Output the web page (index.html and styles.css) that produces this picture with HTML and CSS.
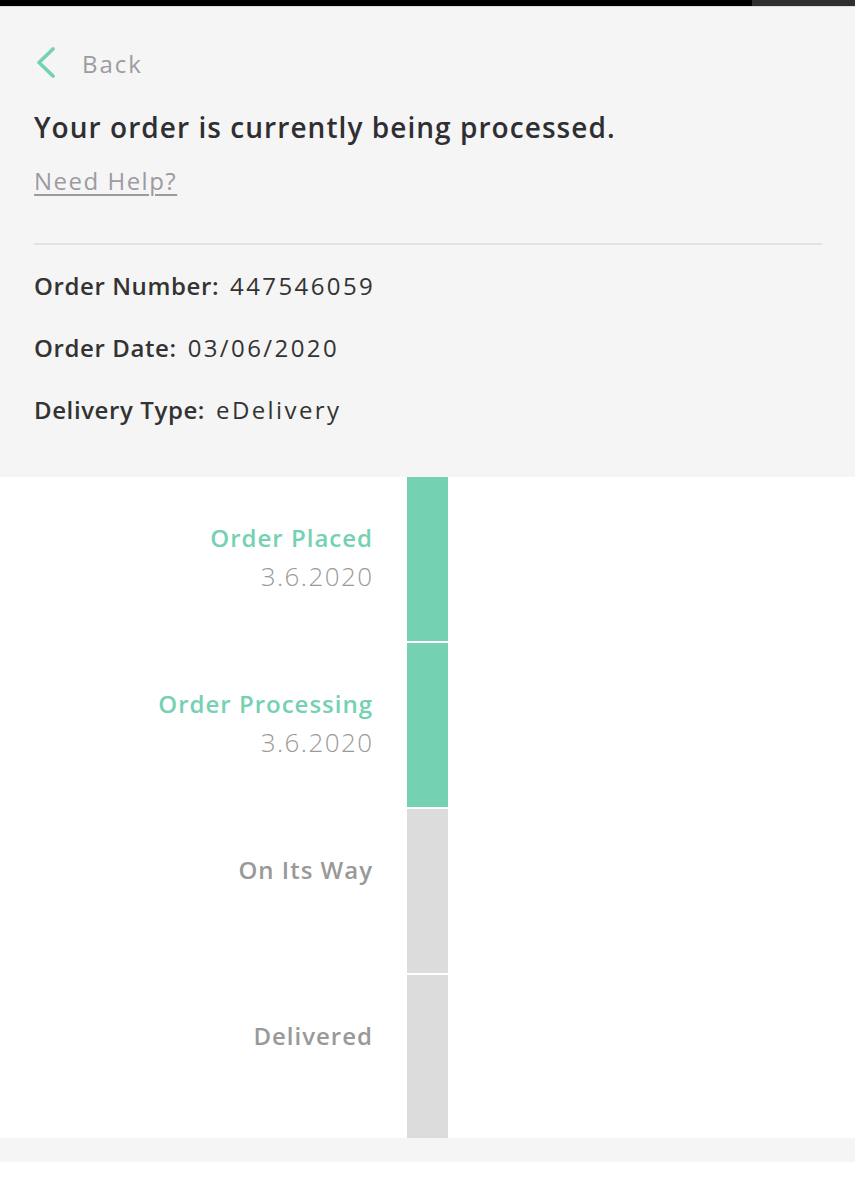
FILE: index.html
```html
<!DOCTYPE html>
<html>
<head>
<meta charset="utf-8">
<link rel="stylesheet" href="styles.css">
</head>
<body>
<div class="topbar"><div class="topbar-end"></div></div>
<header class="header">
  <a class="back" href="#">
    <svg class="chev" width="22" height="32" viewBox="0 0 22 32"><path d="M18 2 L4 15.5 L18 29" fill="none" stroke="#74d1b2" stroke-width="3.6" stroke-linecap="round" stroke-linejoin="round"/></svg>
    <span class="back-text">Back</span>
  </a>
  <h1 class="title">Your order is currently being processed.</h1>
  <a class="help" href="#">Need Help?</a>
  <div class="divider"></div>
  <div class="info">
    <div class="info-row"><span class="info-label">Order Number:</span><span class="info-value">447546059</span></div>
    <div class="info-row"><span class="info-label">Order Date:</span><span class="info-value">03/06/2020</span></div>
    <div class="info-row"><span class="info-label">Delivery Type:</span><span class="info-value">eDelivery</span></div>
  </div>
</header>
<section class="timeline">
  <div class="step done">
    <div class="step-text"><div class="step-name">Order Placed</div><div class="step-date">3.6.2020</div></div>
    <div class="step-bar"></div>
  </div>
  <div class="step done">
    <div class="step-text"><div class="step-name">Order Processing</div><div class="step-date">3.6.2020</div></div>
    <div class="step-bar"></div>
  </div>
  <div class="step">
    <div class="step-text"><div class="step-name">On Its Way</div></div>
    <div class="step-bar"></div>
  </div>
  <div class="step last">
    <div class="step-text"><div class="step-name">Delivered</div></div>
    <div class="step-bar"></div>
  </div>
</section>
<div class="footer-band"></div>
</body>
</html>
```
FILE: styles.css
```css
* { box-sizing: border-box; }
html, body { margin: 0; padding: 0; background: #ffffff; }
body { font-family: "Open Sans", "Liberation Sans", sans-serif; color: #333333; width: 855px; }

.topbar { height: 7px; background: #000000; border-bottom: 1px solid #dcdcdc; display: flex; justify-content: flex-end; }
.topbar-end { width: 103px; height: 6px; background: #2e2e2e; }

.header { background: #f5f5f5; padding: 0 33px 0 34px; height: 470px; display: flex; flex-direction: column; }

.back { display: flex; align-items: center; text-decoration: none; margin-top: 40px; height: 32px; }
.chev { margin-left: 1px; }
.back-text { font-size: 24px; color: #9b9ba1; margin-left: 25px; font-weight: 500; letter-spacing: 2px; }

.title { margin: 30px 0 0; font-size: 28px; font-weight: 600; line-height: 36px; color: #2f2f33; letter-spacing: 1.05px; }

.help { margin-top: 21px; font-size: 24px; line-height: 30px; color: #9b9ba1; text-decoration: underline; text-decoration-thickness: 2px; text-underline-offset: 4px; align-self: flex-start; font-weight: 500; letter-spacing: 1.5px; }

.divider { margin-top: 47px; height: 2px; background: #e2e2e2; }

.info { margin-top: 25px; display: flex; flex-direction: column; gap: 30px; }
.info-row { font-size: 24px; line-height: 32px; color: #333333; }
.info-label { font-weight: 600; letter-spacing: 0.6px; }
.info-value { font-weight: 400; margin-left: 11px; letter-spacing: 2.4px; }

.timeline { display: flex; flex-direction: column; }
.step { display: flex; height: 166px; }
.step-text { width: 372px; text-align: right; padding-top: 43px; }
.step-name { font-size: 24px; line-height: 36px; font-weight: 600; color: #999999; letter-spacing: 1px; margin-right: -1px; }
.step-date { font-size: 26px; line-height: 40px; font-weight: 300; color: #9a9a9a; letter-spacing: 1.4px; margin-right: -1.4px; }
.done .step-name { color: #74d1b2; }
.step-bar { margin-left: 35px; width: 41px; height: 164px; background: #dcdcdc; }
.done .step-bar { background: #74d1b2; }
.step.last { height: 163px; }
.step.last .step-bar { height: 163px; }

.footer-band { height: 24px; background: #f5f5f5; }
```
